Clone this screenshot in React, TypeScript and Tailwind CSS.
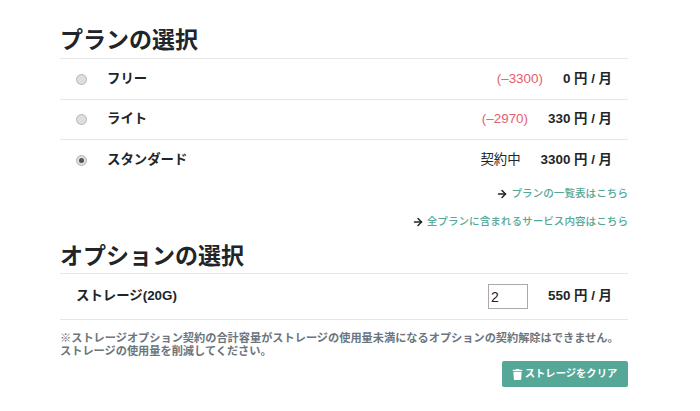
import { FaTrash } from 'react-icons/fa';
import { ArrowRight } from 'lucide-react';

const font = "font-['Liberation_Sans','Noto_Sans_CJK_JP',sans-serif]";

const plans = [
  { name: 'フリー', note: '(–3300)', price: '0 円 / 月', checked: false },
  { name: 'ライト', note: '(–2970)', price: '330 円 / 月', checked: false },
  { name: 'スタンダード', note: '契約中', price: '3300 円 / 月', checked: true },
];

function Radio({ checked }: { checked: boolean }) {
  return (
    <span className="flex h-[11px] w-[11px] items-center justify-center rounded-full border border-[#b5b5b5] bg-[#dedede]">
      {checked && <span className="h-[5px] w-[5px] rounded-full bg-[#555]" />}
    </span>
  );
}

function PlanLink({ children }: { children: string }) {
  return (
    <div className="flex h-7 items-center justify-end gap-[3px] text-[10.6px] font-medium text-[#55a797]">
      <ArrowRight size={12} strokeWidth={3} className="text-[#222]" />
      <span>{children}</span>
    </div>
  );
}

export default function App() {
  return (
    <main className={`${font} h-[411px] w-[700px] overflow-hidden bg-white pt-[24px] pr-[72px] pl-[60px] text-[#212529]`}>
      <h2 className="h-[34px] text-[23px] leading-[32px] font-bold">プランの選択</h2>
      <section className="border-t border-[#e6e6e6]">
        {plans.map((plan, i) => (
          <div
            key={plan.name}
            className={`flex items-center pr-4 pl-4 text-[13.4px] ${i === 0 ? 'h-[41px] border-b border-[#e6e6e6]' : i === 1 ? 'h-10 border-b border-[#e6e6e6]' : 'h-10'}`}
          >
            <Radio checked={plan.checked} />
            <span className="ml-[20px] font-bold">{plan.name}</span>
            <span className={`ml-auto ${plan.checked ? '' : 'text-[#e4606d]'}`}>{plan.note}</span>
            <span className="ml-5 font-bold whitespace-nowrap">{plan.price}</span>
          </div>
        ))}
      </section>
      <div>
        <PlanLink>プランの一覧表はこちら</PlanLink>
        <PlanLink>全プランに含まれるサービス内容はこちら</PlanLink>
      </div>
      <h2 className="mt-[4px] h-[33px] text-[23px] leading-[32px] font-bold">オプションの選択</h2>
      <section className="flex h-[47px] items-center border-y border-[#e6e6e6] pr-4 pl-4 text-[13.4px]">
        <span className="font-bold">ストレージ(20G)</span>
        <input
          readOnly
          value="2"
          className="ml-auto h-[25px] w-10 border border-[#aaa] px-[2px] text-sm outline-none"
        />
        <span className="ml-5 font-bold whitespace-nowrap">550 円 / 月</span>
      </section>
      <p className="mt-3 text-[11.2px] leading-[13px] font-bold text-[#6c757d]">
        ※ストレージオプション契約の合計容量がストレージの使用量未満になるオプションの契約解除はできません。
        <br />
        ストレージの使用量を削減してください。
      </p>
      <div className="mt-[3px] flex justify-end">
        <button className="flex h-[26px] w-[126px] items-center justify-center gap-[2px] rounded-[2px] bg-[#55a797] pr-px text-[10.3px] font-bold text-white">
          <FaTrash size={11} />
          ストレージをクリア
        </button>
      </div>
    </main>
  );
}
